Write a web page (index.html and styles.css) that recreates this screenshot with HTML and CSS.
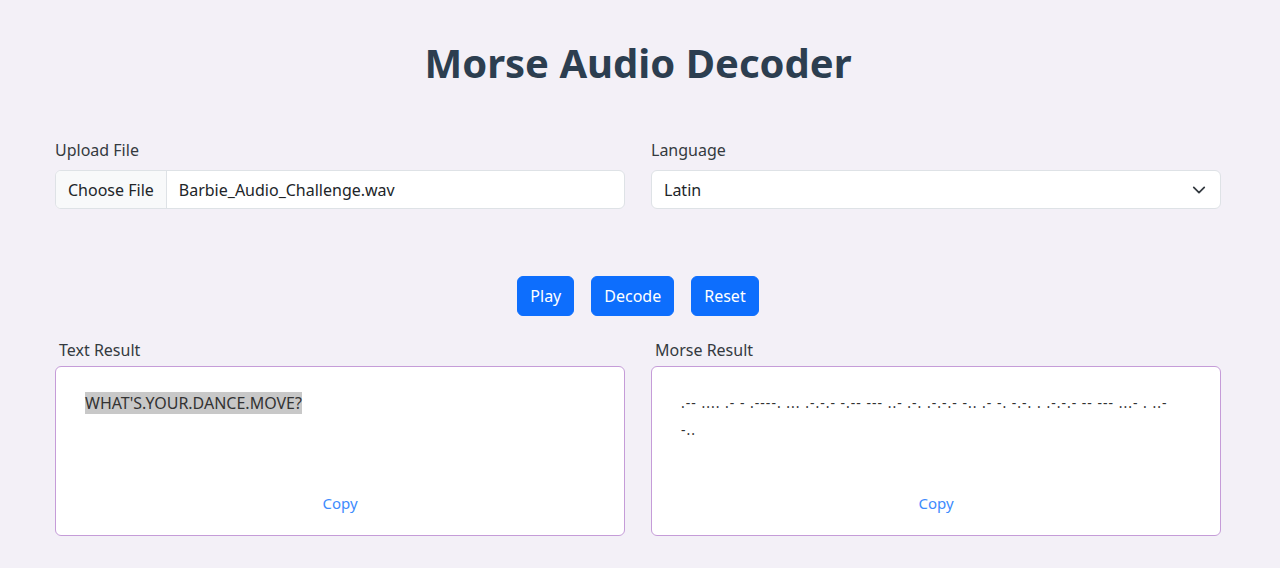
FILE: index.html
```html
<!DOCTYPE html>
<html lang="en">
<head>
<meta charset="utf-8">
<title>Morse Audio Decoder</title>
<link rel="stylesheet" href="styles.css">
</head>
<body>
<main class="page">
  <h1 class="title">Morse Audio Decoder</h1>

  <section class="form-row">
    <div class="field">
      <label class="field-label">Upload File</label>
      <div class="file-input">
        <span class="file-btn">Choose File</span>
        <span class="file-name">Barbie_Audio_Challenge.wav</span>
      </div>
    </div>
    <div class="field">
      <label class="field-label">Language</label>
      <div class="select">
        <span class="select-value">Latin</span>
        <svg class="chevron" width="14" height="14" viewBox="0 0 16 16"><path d="M2 5l6 6 6-6" fill="none" stroke="#343a40" stroke-width="2" stroke-linecap="round" stroke-linejoin="round"/></svg>
      </div>
    </div>
  </section>

  <section class="actions">
    <button class="btn">Play</button>
    <button class="btn">Decode</button>
    <button class="btn">Reset</button>
  </section>

  <section class="results">
    <div class="result">
      <div class="result-label">Text Result</div>
      <div class="result-box">
        <div class="result-text"><span class="hl">WHAT'S.YOUR.DANCE.MOVE?</span></div>
        <a class="copy">Copy</a>
      </div>
    </div>
    <div class="result">
      <div class="result-label">Morse Result</div>
      <div class="result-box">
        <div class="result-morse">.-- .... .- - .----. ... .-.-.- -.-- --- ..- .-. .-.-.- -.. .- -. -.-. . .-.-.- -- --- ...- . ..- -..</div>
        <a class="copy">Copy</a>
      </div>
    </div>
  </section>
</main>
</body>
</html>
```

FILE: styles.css
```css
* { box-sizing: border-box; }
html, body { margin: 0; padding: 0; }
body {
  background: #f3f0f7;
  font-family: "Noto Sans", "Open Sans", sans-serif;
  font-size: 16px;
  color: #343a40;
}
.page {
  padding: 36px 59px 0 55px;
}
.title {
  margin: 0;
  text-align: center;
  font-size: 40px;
  line-height: 54px;
  font-weight: 700;
  color: #2c3e50;
}
.form-row {
  margin-top: 48px;
  display: grid;
  grid-template-columns: 1fr 1fr;
  column-gap: 26px;
}
.field-label {
  display: block;
  line-height: 24px;
  margin-bottom: 8px;
  color: #343a40;
}
.file-input, .select {
  height: 39px;
  background: #fff;
  border: 1px solid #dee2e6;
  border-radius: 6px;
  display: flex;
  align-items: center;
  overflow: hidden;
  color: #212529;
}
.file-btn {
  height: 100%;
  display: flex;
  align-items: center;
  padding: 0 12px;
  background: #f8f9fa;
  border-right: 1px solid #dee2e6;
}
.file-name { padding-left: 12px; }
.select {
  justify-content: space-between;
  padding: 0 14px 0 12px;
}
.actions {
  margin-top: 67px;
  display: flex;
  justify-content: center;
  gap: 17px;
}
.btn {
  font-family: inherit;
  font-size: 16px;
  line-height: 24px;
  color: #fff;
  background: #0d6efd;
  border: 1px solid #0d6efd;
  border-radius: 6px;
  padding: 7px 12px;
}
.results {
  margin-top: 22px;
  display: grid;
  grid-template-columns: 1fr 1fr;
  column-gap: 26px;
}
.result-label {
  padding-left: 4px;
  line-height: 24px;
  margin-bottom: 4px;
  color: #343a40;
}
.result-box {
  height: 170px;
  background: #fff;
  border: 1px solid #c59cd8;
  border-radius: 6px;
  padding: 24px 29px 20px 29px;
  display: flex;
  flex-direction: column;
  justify-content: space-between;
}
.result-text {
  line-height: 24px;
  color: #333;
}
.hl { background: #c8c8c8; }
.result-morse {
  font-size: 14px;
  letter-spacing: 1px;
  line-height: 27px;
  color: #333;
  margin-top: -2px;
  padding-right: 14px;
}
.copy {
  align-self: center;
  color: #3d8bfd;
  font-size: 15px;
  line-height: 24px;
  cursor: pointer;
}
```
